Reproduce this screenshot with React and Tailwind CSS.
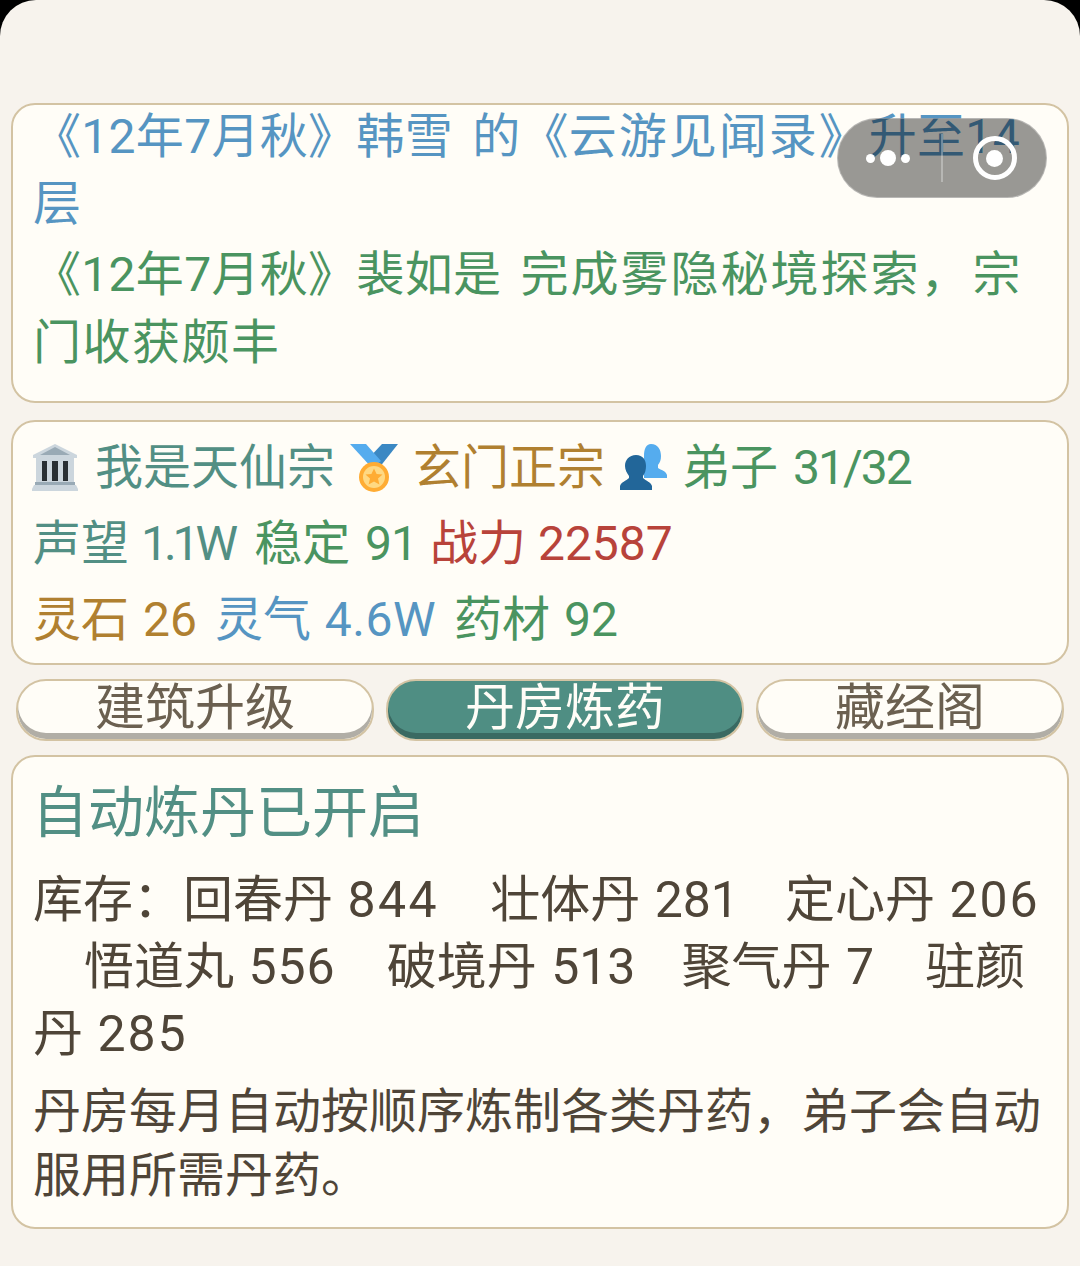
const font = { fontFamily: '"Roboto", "Noto Sans CJK SC", sans-serif' };

function Temple() {
  return (
    <svg width="48" height="48" viewBox="0 0 48 48" className="shrink-0">
      <path d="M24 0 L46 11 L46 14 L2 14 L2 11 Z" fill="#ccd6dd" />
      <path d="M24 3 L39 11 L9 11 Z" fill="#99aab5" />
      <rect x="5" y="14" width="38" height="25" fill="#ccd6dd" />
      <rect x="11" y="17" width="5" height="20" fill="#292f33" />
      <rect x="21" y="17" width="6" height="20" fill="#292f33" />
      <rect x="32" y="17" width="5" height="20" fill="#292f33" />
      <rect x="4" y="38" width="40" height="3" fill="#99aab5" />
      <path d="M3 41 H45 L47 45 V47 H1 V45 Z" fill="#ccd6dd" />
    </svg>
  );
}

function Medal() {
  return (
    <svg width="48" height="48" viewBox="0 0 48 48" className="shrink-0">
      <path d="M48 0 L32 0 L16 17 L29 24 Z" fill="#3b88c3" />
      <path d="M0 0 L16 0 L31 17 L22 24 Z" fill="#55acee" />
      <circle cx="24" cy="33" r="15" fill="#ffac33" />
      <circle cx="24" cy="33" r="11" fill="#ffd983" />
      <path d="M24 24.5 L26.6 30 L32.5 30.6 L28 34.5 L29.4 40.5 L24 37.4 L18.6 40.5 L20 34.5 L15.5 30.6 L21.4 30 Z" fill="#ffac33" />
    </svg>
  );
}

function People() {
  return (
    <svg width="48" height="48" viewBox="0 0 48 48" className="shrink-0">
      <path d="M31 0 C38 0 41 6 41 12 C41 16 40 18 38 21 L38 24 C41 26 46 27 47 31 L47 34 L24 34 L24 12 C24 5 26 0 31 0 Z" fill="#55acee" />
      <path d="M16 11 C23 11 26 16 26 22 C26 26 25 29 23 32 L23 34 C26 37 31 38 32 42 L32 46 L0 46 L0 42 C1 38 6 37 9 34 L9 32 C7 29 5 26 5 22 C5 16 9 11 16 11 Z" fill="#226699" />
    </svg>
  );
}

function Panel({ className, children }) {
  return (
    <div className={`rounded-[24px] border-2 border-[#d3c3a3] bg-[#fffdf7] ${className}`}>{children}</div>
  );
}

function Tab({ label, active, className }) {
  return (
    <div
      className={`flex h-[62px] flex-none items-center justify-center rounded-[30px] border-2 border-[#d3c3a3] pb-[4px] text-[50px] leading-none ${className} ${
        active
          ? "bg-[#4f8e83] text-[#fffdf7] shadow-[inset_0_-6px_0_#3a6a62]"
          : "bg-[#fffdf7] text-[#6b6050] shadow-[inset_0_-6px_0_#b1aea6]"
      }`}
    >
      {label}
    </div>
  );
}

export default function App() {
  return (
    <div className="h-[1266px] w-[1080px] overflow-hidden bg-black" style={font}>
      <div className="relative h-full w-full overflow-hidden rounded-t-[36px] bg-[#f7f3ed]">
        <div className="flex flex-col px-[11px] pt-[103px]">
          <Panel className="h-[300px] overflow-hidden px-[20px] text-[48px] tracking-[0.3px] [word-spacing:7px]">
            <p className="-mt-[2px] leading-[67px] text-[#5695c2]">
              《12年7月秋》韩雪 的《<span className="tracking-[2px]">云游见闻录》</span>升至14层
            </p>
            <p className="mt-[4px] leading-[68px] text-[#4a9460]">
              《12年7月秋》裴如是 <span className="tracking-[2px]">完成雾隐秘境探索</span>
              <span className="tracking-[4px]">，</span>宗<span className="tracking-[1.5px]">门收获颇丰</span>
            </p>
          </Panel>

          <Panel className="mt-[17px] h-[245px] px-[20px] pt-[8px] text-[48px] leading-[76px] [word-spacing:3px]">
            <div className="flex items-center whitespace-nowrap">
              <span className="-ml-[2px]"><Temple /></span>
              <span className="ml-[16px] text-[#528f84]">我是天仙宗</span>
              <span className="ml-[15px]"><Medal /></span>
              <span className="ml-[15px] text-[#b08030]">玄门正宗</span>
              <span className="ml-[15px]"><People /></span>
              <span className="ml-[14px] text-[#4a9460]">弟子 <span className="tracking-[-2px]">31/32</span></span>
            </div>
            <div className="flex whitespace-nowrap">
              <span className="text-[#528f84] [word-spacing:0px]">声望 <span className="tracking-[-4px]">1.1W</span></span>
              <span className="ml-[20px] text-[#4a9460]">稳定 <span className="tracking-[-1px]">91</span></span>
              <span className="ml-[13px] text-[#b8433a] [word-spacing:0px]">战力 22587</span>
            </div>
            <div className="flex gap-[18px] whitespace-nowrap [word-spacing:2px]">
              <span className="text-[#b08030]">灵石 26</span>
              <span className="text-[#5695c2]">灵气 <span className="tracking-[0.5px]">4.6W</span></span>
              <span className="text-[#4a9460]">药材 92</span>
            </div>
          </Panel>

          <div className="mt-[14px] flex gap-[12px] px-[5px]">
            <Tab label="建筑升级" className="w-[358px]" />
            <Tab label="丹房炼药" active className="w-[358px]" />
            <Tab label="藏经阁" className="w-[308px]" />
          </div>

          <Panel className="mt-[14px] h-[474px] px-[20px] pt-[20px] text-[#4f4538]">
            <h2 className="-ml-[1px] text-[56px] font-normal leading-[72px] text-[#528f84]">自动炼丹已开启</h2>
            <p className="mt-[18px] text-[50px] leading-[67px] [word-spacing:2px]">
              库存：回春丹 <span className="tracking-[2.5px]">844</span><wbr />{"\u2003"}壮体丹 281<wbr />
              <span className="-ml-[5px]">{"\u2003"}定心丹</span> <span className="tracking-[2px]">206</span><wbr />{"\u2003"}悟道丸 <span className="tracking-[1px]">556</span><wbr />{"\u2003"}破境丹 513<wbr />
              <span className="-ml-[5px]">{"\u2003"}聚气丹</span> 7<wbr />{"\u2003"}驻颜丹 <span className="tracking-[2px]">285</span>
            </p>
            <p className="mt-[12px] text-[48px] leading-[64px]">丹房每月自动按顺序炼制各类丹药，弟子会自动服用所需丹药。</p>
          </Panel>
        </div>

        {/* wechat capsule */}
        <div className="absolute left-[837px] top-[118px] flex h-[80px] w-[210px] items-center rounded-[40px] border border-white/30 bg-black/40">
          <div className="flex w-[100px] items-center justify-center gap-[5px]">
            <span className="h-[9px] w-[9px] rounded-full bg-white" />
            <span className="h-[16px] w-[16px] rounded-full bg-white" />
            <span className="h-[9px] w-[9px] rounded-full bg-white" />
          </div>
          <div className="ml-[3px] h-[48px] w-[2px] bg-white/30" />
          <div className="flex flex-1 items-center justify-center">
            <div className="flex h-[44px] w-[44px] items-center justify-center rounded-full border-[5px] border-white">
              <span className="h-[17px] w-[17px] rounded-full bg-white" />
            </div>
          </div>
        </div>
      </div>
    </div>
  );
}
